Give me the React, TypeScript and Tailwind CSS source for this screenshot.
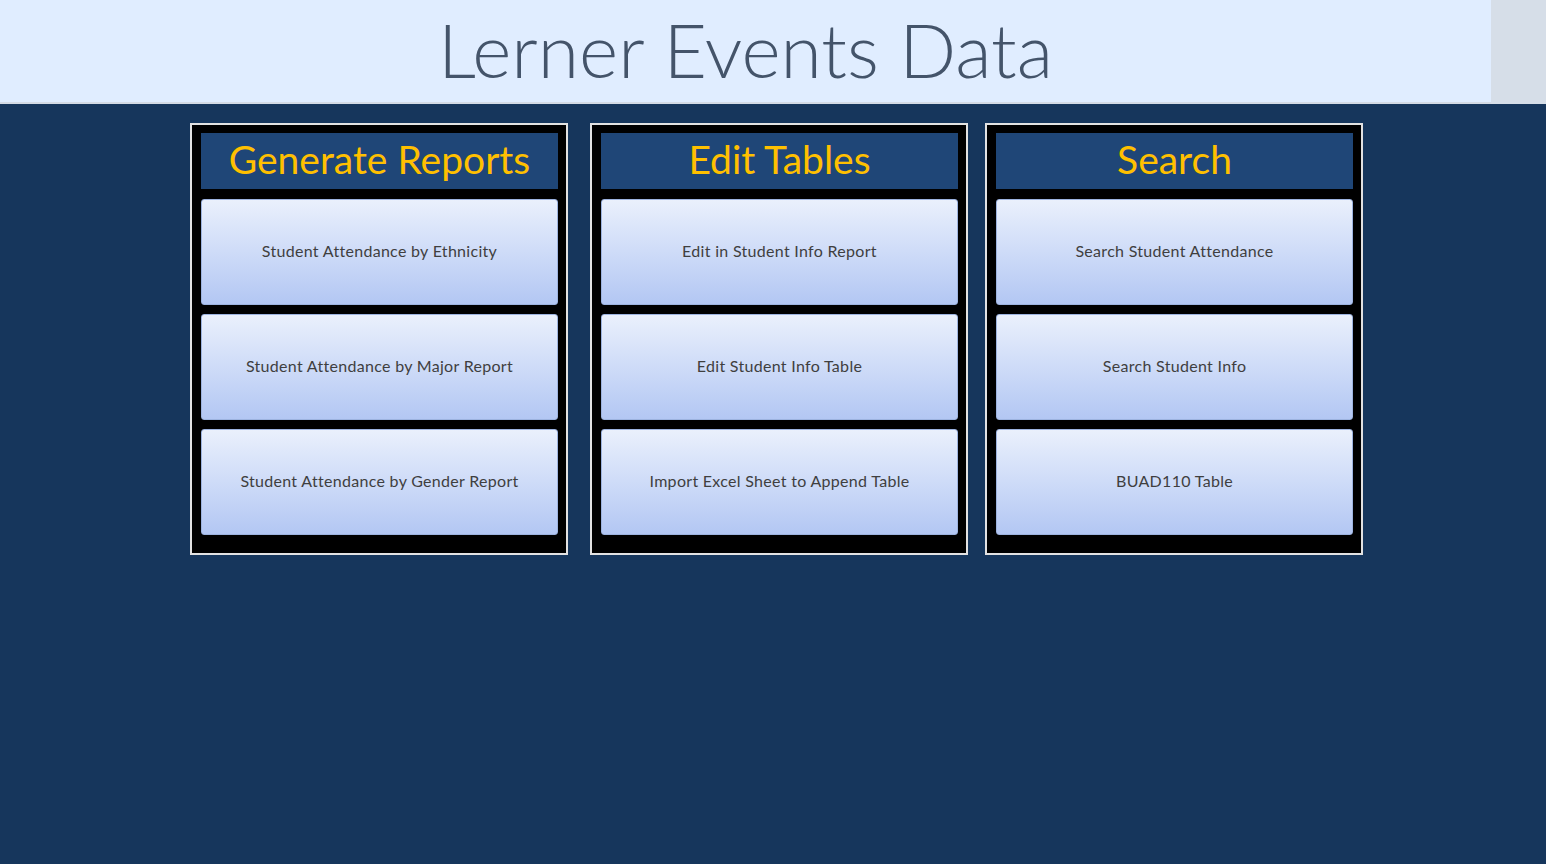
import React from 'react';

const panels = [
  {
    title: 'Generate Reports',
    items: [
      'Student Attendance by Ethnicity',
      'Student Attendance by Major Report',
      'Student Attendance by Gender Report',
    ],
    className: 'ml-[190px]',
  },
  {
    title: 'Edit Tables',
    items: ['Edit in Student Info Report', 'Edit Student Info Table', 'Import Excel Sheet to Append Table'],
    className: 'ml-[22px]',
  },
  {
    title: 'Search',
    items: ['Search Student Attendance', 'Search Student Info', 'BUAD110 Table'],
    className: 'ml-[17px]',
  },
];

const Panel = ({ title, items, className }: { title: string; items: string[]; className: string }) => (
  <div className={`w-[378px] border-2 border-[#e2e2e2] bg-black pt-[8px] pl-[9px] pr-[8px] pb-[18px] ${className}`}>
    <div className="h-[56px] bg-[#1f4677] flex items-center justify-center text-[39px] text-[#ffc000] leading-none pb-[3px]">
      {title}
    </div>
    <div className="mt-[10px] flex flex-col gap-[9px]">
      {items.map((label) => (
        <button
          key={label}
          className="h-[106px] w-full rounded-[3px] border border-[#9db3df] bg-gradient-to-b from-[#eaf0fc] to-[#b3c7f3] text-[16px] tracking-[0.3px] text-[#3f3f3f] flex items-center justify-center pb-[2px]"
        >
          {label}
        </button>
      ))}
    </div>
  </div>
);

export default function App() {
  return (
    <div className="min-h-[864px] bg-[#16365c]" style={{ fontFamily: 'Lato, "Noto Sans", sans-serif' }}>
      <div className="flex h-[104px]">
        <div className="flex-1 bg-[#e0edff] border-b-2 border-[#d4dbe5] flex items-center justify-center">
          <h1 className="text-[75px] font-light text-[#44546a] leading-none pb-[4px]">
            Lerner Events Data
          </h1>
        </div>
        <div className="w-[55px] bg-[#d6dee8]" />
      </div>
      <div className="flex pt-[19px]">
        {panels.map((p) => (
          <Panel key={p.title} {...p} />
        ))}
      </div>
    </div>
  );
}
